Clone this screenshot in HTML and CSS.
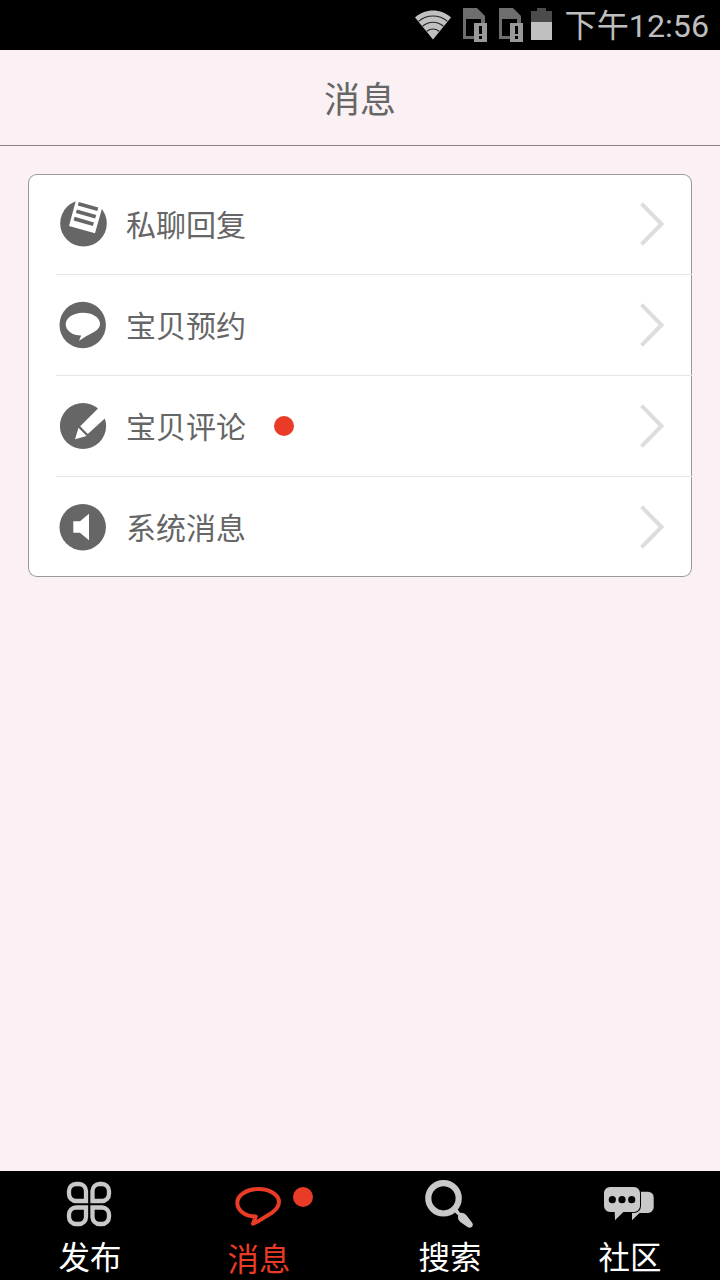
FILE: index.html
```html
<!DOCTYPE html>
<html lang="zh-CN">
<head>
<meta charset="utf-8">
<title>消息</title>
<link rel="stylesheet" href="styles.css">
</head>
<body>
<div class="screen">
  <div class="status">
    <svg class="wifi" width="36" height="30" viewBox="0 0 36 30">
      <path d="M0 7.500C10-1.700 26-1.700 36 7.500L18 29.500Z" fill="#c0c0c0"/>
      <g fill="none" stroke="#222" stroke-width="1.100"><path d="M3.500 11.300C12 4.300 24 4.300 32.500 11.300M7.500 16.200C14 11 22 11 28.500 16.200M11.800 21.200C15.500 18.500 20.500 18.500 24.200 21.200"/></g>
    </svg>
    <svg class="sim" width="25" height="34" viewBox="0 0 25 34">
      <path fill="#6e6e6e" fill-rule="evenodd" d="M0 0H14L22 8V31H0ZM3 11V28H18V11Z"/>
      <path fill="#000" d="M10 14H24V34H10Z"/>
      <path fill="#6e6e6e" d="M18 11H22V15H18ZM3 28H11V31H3Z"/>
      <path fill="#999" d="M11 15H24V34H11Z"/><path fill="#000" d="M16 18H19V26H16ZM16 28H19V31H16Z"/>
    </svg>
    <svg class="sim" width="25" height="34" viewBox="0 0 25 34">
      <path fill="#6e6e6e" fill-rule="evenodd" d="M0 0H14L22 8V31H0ZM3 11V28H18V11Z"/>
      <path fill="#000" d="M10 14H24V34H10Z"/>
      <path fill="#6e6e6e" d="M18 11H22V15H18ZM3 28H11V31H3Z"/>
      <path fill="#999" d="M11 15H24V34H11Z"/><path fill="#000" d="M16 18H19V26H16ZM16 28H19V31H16Z"/>
    </svg>
    <svg class="battery" width="21" height="32" viewBox="0 0 21 32">
      <path fill="#4b4b4b" d="M6 0H15V3H21V14H0V3H6Z"/><path fill="#c0c0c0" d="M0 14H21V32H0Z"/>
    </svg>
    <span class="clock">下午12:56</span>
  </div>
  <header class="header">消息</header>
  <main class="content">
    <ul class="list">
      <li class="row">
        <svg class="row-icon" width="48" height="48" viewBox="0 0 48 48">
          <circle cx="24.500" cy="23.300" r="23.300" fill="#666"/>
          <path fill="#fff" d="M17.300-1L10 26L36 33.300L44.500 3V-1Z"/>
          <path stroke="#666" stroke-width="3.700" d="M19.300 3.700L38.800 9.200M17.400 11.200L36.700 16.800M15.100 18.600L34.400 24.200"/>
        </svg>
        <span class="label">私聊回复</span>
        <svg class="chevron" width="24" height="44" viewBox="0 0 24 44"><path d="M1.500 1.700L21.500 22L1.500 42.300"/></svg>
      </li>
      <li class="row">
        <svg class="row-icon" width="48" height="48" viewBox="0 0 48 48">
          <circle cx="23.700" cy="24" r="23.200" fill="#666"/>
          <path fill="#fff" d="M23.800 11.700C33.500 11.700 41 16.500 41 22.800C41 26.800 38 29.500 34 31.500C29 34 25 36.500 20 39.700L22.200 34.500C13.500 34.500 6.700 29.500 6.700 23.200C6.700 16.800 14.500 11.700 23.800 11.700Z"/>
        </svg>
        <span class="label">宝贝预约</span>
        <svg class="chevron" width="24" height="44" viewBox="0 0 24 44"><path d="M1.500 1.700L21.500 22L1.500 42.300"/></svg>
      </li>
      <li class="row">
        <svg class="row-icon" width="48" height="48" viewBox="0 0 48 48">
          <circle cx="24" cy="24" r="23.100" fill="#666"/>
          <path fill="#fff" d="M39 6.500L21.200 24.200L28.800 31.900L48 14.500V0H45.500ZM19.500 25.800L27.600 33.900L16 37.300Z"/>
        </svg>
        <span class="label">宝贝评论</span>
        <i class="dot row-dot"></i>
        <svg class="chevron" width="24" height="44" viewBox="0 0 24 44"><path d="M1.500 1.700L21.500 22L1.500 42.300"/></svg>
      </li>
      <li class="row">
        <svg class="row-icon" width="48" height="48" viewBox="0 0 48 48">
          <circle cx="23.700" cy="24.200" r="23.200" fill="#666"/>
          <path fill="#fff" d="M14.300 18.300H21L30 10.700V37.300L21 29.700H14.300Z"/>
        </svg>
        <span class="label">系统消息</span>
        <svg class="chevron" width="24" height="44" viewBox="0 0 24 44"><path d="M1.500 1.700L21.500 22L1.500 42.300"/></svg>
      </li>
    </ul>
  </main>
  <nav class="nav">
    <a class="tab">
      <svg class="tab-icon" width="60" height="54" viewBox="0 0 60 54">
        <g fill="none" stroke="#c9c9c9" stroke-width="4.300">
          <path d="M16 7H19A7 7 0 0 1 26 14V24H16A7 7 0 0 1 9 17V14A7 7 0 0 1 16 7Z"/>
          <path d="M39.500 7H42A7 7 0 0 1 49 14V17A7 7 0 0 1 42 24H32.500V14A7 7 0 0 1 39.500 7Z"/>
          <path d="M16 30.500H26V40A7 7 0 0 1 19 47H16A7 7 0 0 1 9 40V37.500A7 7 0 0 1 16 30.500Z"/>
          <path d="M32.500 30.500H42A7 7 0 0 1 49 37.500V40A7 7 0 0 1 42 47H39.500A7 7 0 0 1 32.500 40Z"/>
        </g>
      </svg>
      <span class="tab-label">发布</span>
    </a>
    <a class="tab active">
      <svg class="tab-icon" width="60" height="54" viewBox="0 0 60 54">
        <path fill="none" stroke="#e93b26" stroke-width="4" stroke-linejoin="round" d="M18.300 12C29.500 12 39 17.500 39 25C39 31.500 33 35.500 27.500 38.500C22 41.500 19 44.500 13 46.700L15.800 39.500C5.500 39.500-2.700 33.500-2.700 26C-2.700 18 7 12 18.300 12Z"/>
      </svg>
      <span class="tab-label">消息</span>
      <i class="dot tab-dot"></i>
    </a>
    <a class="tab">
      <svg class="tab-icon" width="60" height="54" viewBox="0 0 60 54">
        <circle cx="23.500" cy="21.300" r="15.200" fill="none" stroke="#c9c9c9" stroke-width="6.200"/>
        <path fill="#c9c9c9" d="M34 34.500L37 31.500L40 35.800C43 35.500 45 36.500 47 39L52 45.500C54.500 49 51 52 47.500 50L41 45.500C38.500 43.500 37.500 41.500 38.200 38.500Z"/>
      </svg>
      <span class="tab-label">搜索</span>
    </a>
    <a class="tab">
      <svg class="tab-icon" width="60" height="54" viewBox="0 0 60 54">
        <path fill="#c9c9c9" d="M36 14.700H48A5.700 5.700 0 0 1 53.700 20.400V30.300A5.700 5.700 0 0 1 48 36H39.500L32 43.300V30Z"/>
        <path fill="#c9c9c9" stroke="#000" stroke-width="2" paint-order="stroke" d="M10 10H34A6 6 0 0 1 40 16V29A6 6 0 0 1 34 35H23.300L15 43.300L14.700 35H10A6 6 0 0 1 4 29V16A6 6 0 0 1 10 10Z"/>
        <circle cx="12.300" cy="22.700" r="3.600"/><circle cx="22" cy="22.700" r="3.600"/><circle cx="31.700" cy="22.700" r="3.600"/>
      </svg>
      <span class="tab-label">社区</span>
    </a>
  </nav>
</div>
</body>
</html>
```
FILE: styles.css
```css
* { box-sizing: border-box; }
body {
  margin: 0;
  font-family: Roboto, "Noto Sans CJK SC", sans-serif;
}
svg { display: block; flex: none; overflow: visible; }
.screen {
  display: flex;
  flex-direction: column;
  width: 720px;
  height: 1280px;
  overflow: hidden;
  background: #fbf1f5;
}
.status {
  display: flex;
  justify-content: flex-end;
  align-items: center;
  height: 50px;
  padding-right: 11px;
  background: #000;
}
.wifi { margin-right: 12px; }
.sim { margin-right: 11px; }
.battery { margin: 0 12px 2px -4px; }
.clock {
  padding-top: 2px;
  color: #bebebe;
  font-size: 32.2px;
  line-height: 48px;
  white-space: nowrap;
}
.header {
  height: 96px;
  padding-top: 3px;
  border-bottom: 1px solid #8a8084;
  color: #666;
  font-size: 36px;
  line-height: 96px;
  text-align: center;
}
.content { flex: 1; padding: 28px; }
.list {
  margin: 0;
  padding: 0 0 0 28px;
  border-radius: 9px;
  background: #fff;
  box-shadow: inset 0 0 0 1px #999;
  list-style: none;
}
.row {
  display: flex;
  align-items: center;
  height: 101px;
  padding: 0 28px 0 3px;
  border-bottom: 1px solid #e6e6e6;
}
.row:last-child { height: 100px; border-bottom: 0; }
.label {
  margin-left: 19px;
  padding-top: 4px;
  color: #666;
  font-size: 30px;
  line-height: 44px;
}
.chevron {
  margin-left: auto;
  fill: none;
  stroke: #ddd;
  stroke-width: 4;
}
.dot {
  width: 20px;
  height: 20px;
  border-radius: 50%;
  background: #e93b26;
}
.row-dot { margin-left: 28px; }
.nav {
  display: grid;
  grid-template-columns: repeat(4, 1fr);
  height: 109px;
  background: #000;
}
.tab {
  position: relative;
  display: flex;
  flex-direction: column;
  align-items: center;
  padding-top: 6px;
  color: #fff;
}
.tab-label {
  margin-top: 6px;
  font-size: 31.5px;
  line-height: 44px;
}
.active { color: #e93b26; }
.active .tab-label { margin: 8px 22px 0 0; }
.tab-dot { position: absolute; top: 16px; left: 113px; }
```
